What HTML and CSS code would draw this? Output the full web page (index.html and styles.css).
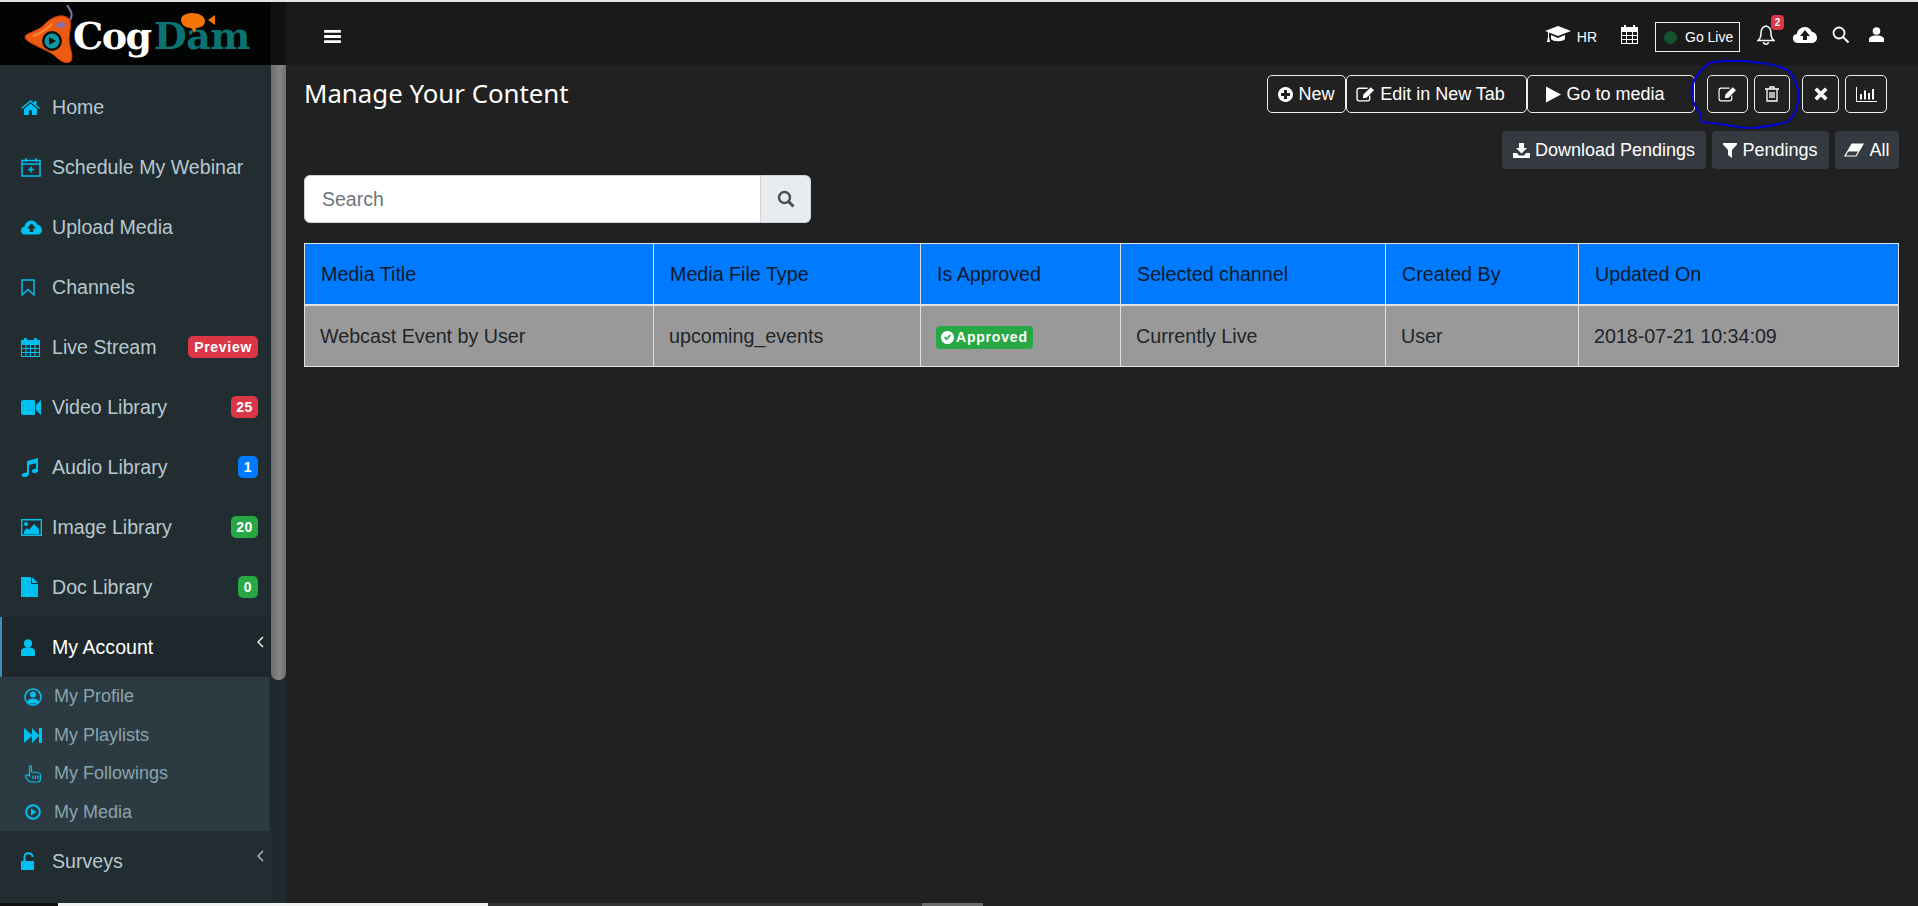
FILE: index.html
```html
<!DOCTYPE html>
<html>
<head>
	<title>Manage Your Content</title>
	<meta charset="utf-8" />
	<link rel="stylesheet" href="styles.css">
</head>
<body>
	<div class="topline"></div>
	<div class="top">
		<div class="logo">
			<svg class="logo-mark" width="50" height="60" viewBox="0 0 50 60">
				<path d="M43 0C46 5 49 8 47 13L44 18" fill="none" stroke="#8a6fa8" stroke-width="2"/>
				<path d="M1 32C1 28 13 27 20 20C27 12 38 8 44 13C49 18 45 26 45 34C45 42 50 50 47 56C43 60 36 56 31 51C25 45 1 38 1 32Z" fill="#ee5a12" stroke="#c93f08"/>
				<path d="M9 31C15 29 22 25 28 19" fill="none" stroke="#fb8a3c" stroke-width="2"/>
				<ellipse cx="37" cy="20" rx="5" ry="3" fill="#8a6fa8"/>
				<circle cx="28" cy="36" r="10" fill="#111"/>
				<circle cx="28" cy="36" r="7.500" fill="#0f9aa0"/>
				<path d="M25 32L32 36L25 40Z" fill="#111"/>
			</svg>
			<span class="logo-cog">Cog</span><span class="logo-dam">Dam</span>
			<svg class="logo-bubble" width="36" height="22" viewBox="0 0 36 22">
				<path d="M1 8C1 3 7 1 12 1C19 1 25 4 25 9C25 14 20 16 16 16L15 21L11 16C6 16 1 13 1 8Z" fill="#f47406"/>
				<path d="M28 8L35 3V13Z" fill="#f47406"/>
			</svg>
		</div>
		<div class="top-gap"></div>
		<div class="navbar">
			<svg class="burger" width="17" height="13" viewBox="0 0 18 14"><path d="M0 0H18V3H0ZM0 5.500H18V8.500H0ZM0 11H18V14H0Z" fill="#fff"/></svg>
			<div class="nav-right">
				<svg class="nav-hat" width="26" height="20" viewBox="0 0 26 20"><path d="M13 1L26 6L13 11L4 7.500V12L5 17H2L3 12V7L0 6ZM6 10L13 13L20 10V14C18 17 8 17 6 14Z" fill="#fff"/></svg>
				<span class="nav-hr">HR</span>
				<svg class="nav-cal" width="19" height="21" viewBox="0 0 19 21"><path d="M1 3H4V1H6V3H13V1H15V3H18V20H1ZM2 8V11H6V8ZM7 8V11H12V8ZM13 8V11H17V8ZM2 12V15H6V12ZM7 12V15H12V12ZM13 12V15H17V12ZM2 16V19H6V16ZM7 16V19H12V16ZM13 16V19H17V16Z" fill="#fff" fill-rule="evenodd"/></svg>
				<div class="golive"><span class="golive-dot"></span><span>Go Live</span></div>
				<div class="bell">
					<svg width="18" height="20" viewBox="0 0 18 20"><path d="M9 1C5 2 4 5 4 8C4 12 3 14 1 15.500H17C15 14 14 12 14 8C14 5 13 2 9 1ZM6.500 17C7 20 11 20 11.500 17" fill="none" stroke="#fff" stroke-width="1.500"/></svg>
					<span class="bell-count">2</span>
				</div>
				<svg class="nav-cloud" width="24" height="16" viewBox="0 0 24 16"><path d="M5 16C1 16 0 13 0 11C0 8 2 7 4 7C4 3 8 0 12 0C15 0 18 2 19 5C22 5 24 8 24 11C24 14 21 16 19 16ZM12 3L7 9H10V13H14V9H17Z" fill="#fff" fill-rule="evenodd"/></svg>
				<svg class="nav-search" width="17" height="17" viewBox="0 0 17 17"><circle cx="7" cy="7" r="5.500" fill="none" stroke="#fff" stroke-width="1.800"/><path d="M11 11L16.500 16.500" stroke="#fff" stroke-width="2"/></svg>
				<svg class="nav-user" width="15" height="15" viewBox="0 0 15 15"><circle cx="7.500" cy="4" r="3.800" fill="#fff"/><path d="M0 15V12C0 10 3 9 5 8.500H10C12 9 15 10 15 12V15Z" fill="#fff"/></svg>
			</div>
		</div>
	</div>

	<div class="page">
		<div class="sidebar">
			<a class="menu-item">
				<svg class="icon" width="19" height="15" viewBox="0 0 19 15" preserveAspectRatio="xMinYMid"><path d="M9.500 0L13 3V1H15.500V5L19 8L18 9L9.500 2L1 9L0 8ZM3 9L9.500 3.500L16 9V15H11V10.500H8V15H3Z"/></svg>
				<span>Home</span>
			</a>
			<a class="menu-item">
				<svg class="icon" width="20" height="20" viewBox="0 0 20 20" preserveAspectRatio="xMinYMid"><path d="M1 3.500H19V19H1ZM5 1V5M15 1V5M1 7H19M7 12.500H13M10 9.500V15.500" fill="none" stroke="#00c0ef" stroke-width="1.500"/></svg>
				<span>Schedule My Webinar</span>
			</a>
			<a class="menu-item">
				<svg class="icon" width="21" height="15" viewBox="0 0 24 16" preserveAspectRatio="xMinYMid"><path d="M5 16C1 16 0 13 0 11C0 8 2 7 4 7C4 3 8 0 12 0C15 0 18 2 19 5C22 5 24 8 24 11C24 14 21 16 19 16ZM12 3L7 9H10V13H14V9H17Z" fill-rule="evenodd"/></svg>
				<span>Upload Media</span>
			</a>
			<a class="menu-item">
				<svg class="icon" width="14" height="17" viewBox="0 0 14 17" preserveAspectRatio="xMinYMid"><path d="M1 1H13V16L7 10.500L1 16Z" fill="none" stroke="#00c0ef" stroke-width="1.400"/></svg>
				<span>Channels</span>
			</a>
			<a class="menu-item">
				<svg class="icon" width="19" height="20" viewBox="0 0 19 20" preserveAspectRatio="xMinYMid"><path d="M0 3H3V1H6V3H13V1H16V3H19V20H0ZM1 8V11H4.500V8ZM5.500 8V11H9V8ZM10 8V11H13.500V8ZM14.500 8V11H18V8ZM1 12V15H4.500V12ZM5.500 12V15H9V12ZM10 12V15H13.500V12ZM14.500 12V15H18V12ZM1 16V19H4.500V16ZM5.500 16V19H9V16ZM10 16V19H13.500V16ZM14.500 16V19H18V16Z" fill-rule="evenodd"/></svg>
				<span>Live Stream</span>
				<span class="badge badge-red badge-wide">Preview</span>
			</a>
			<a class="menu-item">
				<svg class="icon" width="20" height="15" viewBox="0 0 20 15" preserveAspectRatio="xMinYMid"><path d="M2 0H13C14 0 14 1 14 2V13C14 14 14 15 13 15H2C1 15 0 14 0 13V2C0 1 1 0 2 0ZM15 5L20 0V15L15 10Z"/></svg>
				<span>Video Library</span>
				<span class="badge badge-red">25</span>
			</a>
			<a class="menu-item">
				<svg class="icon" width="17" height="19" viewBox="0 0 17 19" preserveAspectRatio="xMinYMid"><path d="M6 3L17 0V13C17 15 12 16 11 14C10 12 13 10 15 11V5L8 7V16C8 19 2 20 1 18C0 16 3 14 6 15Z"/></svg>
				<span>Audio Library</span>
				<span class="badge badge-blue">1</span>
			</a>
			<a class="menu-item">
				<svg class="icon" width="21" height="17" viewBox="0 0 21 17" preserveAspectRatio="xMinYMid"><path d="M0.700 0.700H20.300V16.300H0.700Z" fill="none" stroke="#00c0ef" stroke-width="1.400"/><circle cx="5" cy="5" r="2"/><path d="M3 15V12L6 9L8 11L13 5L18 10V15Z"/></svg>
				<span>Image Library</span>
				<span class="badge badge-green">20</span>
			</a>
			<a class="menu-item">
				<svg class="icon" width="17" height="20" viewBox="0 0 17 20" preserveAspectRatio="xMinYMid"><path d="M0 0H10V7H17V20H0ZM11 0L17 6H11Z"/></svg>
				<span>Doc Library</span>
				<span class="badge badge-green">0</span>
			</a>
			<a class="menu-item active">
				<svg class="icon" width="14" height="17" viewBox="0 0 14 17" preserveAspectRatio="xMinYMid"><circle cx="7" cy="4.500" r="4.200"/><path d="M0 17V12C0 10 3 9 4 8.500H10C11 9 14 10 14 12V17Z"/></svg>
				<span>My Account</span>
				<svg class="chevron" width="8" height="12" viewBox="0 0 8 12"><path d="M7 1L2 6L7 11" fill="none" stroke="#fff" stroke-width="1.300"/></svg>
			</a>
			<div class="submenu">
				<a class="sub-item">
					<svg class="sub-icon" width="18" height="18" viewBox="0 0 18 18"><circle cx="9" cy="9" r="8" fill="none" stroke="#00c0ef" stroke-width="1.600"/><circle cx="9" cy="6.500" r="3"/><path d="M3.500 14C4 11 7 10.500 9 10.500C11 10.500 14 11 14.500 14C12 16 6 16 3.500 14Z"/></svg>
					<span>My Profile</span>
				</a>
				<a class="sub-item">
					<svg class="sub-icon" width="18" height="15" viewBox="0 0 18 15"><path d="M0 0L8 7V0L15 7V0H18V15H15V8L8 15V8L0 15Z"/></svg>
					<span>My Playlists</span>
				</a>
				<a class="sub-item">
					<svg class="sub-icon" width="17" height="18" viewBox="0 0 17 18"><path d="M5 1.500C5 0.500 7 0.500 7 1.500V7C10 7 16 7 16 10V14C16 16 15 17 13 17H6C4 17 1 12 1 11C1 9.500 3 9.500 5 11ZM8.500 10.500V14M11 10.500V14M13.500 10.500V14" fill="none" stroke="#00c0ef" stroke-width="1.200"/></svg>
					<span>My Followings</span>
				</a>
				<a class="sub-item">
					<svg class="sub-icon" width="16" height="16" viewBox="0 0 16 16"><circle cx="8" cy="8" r="6.800" fill="none" stroke="#00c0ef" stroke-width="2"/><path d="M6 4.500L11.500 8L6 11.500Z"/></svg>
					<span>My Media</span>
				</a>
			</div>
			<a class="menu-item">
				<svg class="icon" width="14" height="18" viewBox="0 0 14 18" preserveAspectRatio="xMinYMid"><path d="M0 9H13V18H0Z"/><path d="M3.500 9V5C3.500 0 11.500 0 11.500 5" fill="none" stroke="#00c0ef" stroke-width="2"/></svg>
				<span>Surveys</span>
				<svg class="chevron" width="8" height="12" viewBox="0 0 8 12"><path d="M7 1L2 6L7 11" fill="none" stroke="#b8c7ce" stroke-width="1.300"/></svg>
			</a>
		</div>
		<div class="side-scroll"><div class="side-thumb"></div></div>

		<div class="content">
			<div class="title-row">
				<h1>Manage Your Content</h1>
				<div class="actions">
					<a class="btn-line btn-new">
						<svg width="15" height="15" viewBox="0 0 15 15"><path d="M7.500 0A7.500 7.500 0 1 1 7.499 0ZM6 3V6H3V9H6V12H9V9H12V6H9V3Z" fill="#fff" fill-rule="evenodd"/></svg>
						New
					</a>
					<a class="btn-line btn-edit">
						<svg width="19" height="16" viewBox="0 0 18 15"><path d="M11 2H3C2 2 1 3 1 4V12C1 13 2 14 3 14H11C12 14 13 13 13 12V9" fill="none" stroke="#fff" stroke-width="1.300"/><path d="M14 1L17 4L10 11L6.500 11.500L7 8Z" fill="#fff"/></svg>
						Edit in New Tab
					</a>
					<a class="btn-line btn-go">
						<svg width="15" height="17" viewBox="0 0 14 15"><path d="M0 0L14 7.500L0 15Z" fill="#fff"/></svg>
						Go to media
					</a>
					<a class="btn-line btn-icon btn-pen">
						<svg width="19" height="16" viewBox="0 0 18 15"><path d="M11 2H3C2 2 1 3 1 4V12C1 13 2 14 3 14H11C12 14 13 13 13 12V9" fill="none" stroke="#fff" stroke-width="1.100"/><path d="M14 1L17 4L10 11L6.500 11.500L7 8Z" fill="#fff"/></svg>
					</a>
					<a class="btn-line btn-icon btn-trash">
						<svg width="14" height="16" viewBox="0 0 14 16"><path d="M0 3H14M5 3V1H9V3M2 3V15H12V3M5 6V12M7 6V12M9 6V12" fill="none" stroke="#fff" stroke-width="1.300"/></svg>
					</a>
					<a class="btn-line btn-icon btn-close">
						<svg width="14" height="14" viewBox="0 0 12 12"><path d="M1.500 1.500L10.500 10.500M10.500 1.500L1.500 10.500" stroke="#fff" stroke-width="3.200"/></svg>
					</a>
					<a class="btn-line btn-icon btn-chart">
						<svg width="21" height="15" viewBox="0 0 21 15"><path d="M0.500 0V14.500H21" fill="none" stroke="#fff"/><path d="M4 7H6V12.500H4ZM8 3.500H10V12.500H8ZM12 6H14V12.500H12ZM16 2H18V12.500H16Z" fill="#fff"/></svg>
					</a>
				</div>
			</div>

			<div class="filter-row">
				<a class="btn-dark btn-download">
					<svg width="17" height="15" viewBox="0 0 17 15"><path d="M6 0H11V5H14L8.500 10.500L3 5H6ZM0 10H4L6 12.500H11L13 10H17V15H0Z" fill="#fff"/></svg>
					Download Pendings
				</a>
				<a class="btn-dark btn-pendings">
					<svg width="14" height="15" viewBox="0 0 14 15"><path d="M0 0H14V1.500L9 7V15L5 12V7L0 1.500Z" fill="#fff"/></svg>
					Pendings
				</a>
				<a class="btn-dark btn-all">
					<svg width="20" height="14" viewBox="0 0 20 14"><path d="M8 1H19L12 13H1Z" fill="none" stroke="#fff" stroke-width="1.200"/><path d="M8 1H19L14.500 8.500H3.500Z" fill="#fff"/></svg>
					All
				</a>
			</div>

			<div class="search">
				<input class="search-input" type="text" placeholder="Search">
				<div class="search-btn">
					<svg width="18" height="18" viewBox="0 0 18 18"><circle cx="7.500" cy="7.500" r="5.500" fill="none" stroke="#495057" stroke-width="2.500"/><path d="M11.500 11.500L16.500 16.500" stroke="#495057" stroke-width="3"/></svg>
				</div>
			</div>

			<table class="media-table">
				<colgroup>
					<col class="col-title"><col class="col-type"><col class="col-approved"><col class="col-channel"><col class="col-by"><col class="col-updated">
				</colgroup>
				<thead>
					<tr>
						<th>Media Title</th>
						<th>Media File Type</th>
						<th>Is Approved</th>
						<th>Selected channel</th>
						<th>Created By</th>
						<th>Updated On</th>
					</tr>
				</thead>
				<tbody>
					<tr>
						<td>Webcast Event by User</td>
						<td>upcoming_events</td>
						<td>
							<span class="approved">
								<svg width="13" height="13" viewBox="0 0 13 13"><path d="M6.500 0A6.500 6.500 0 1 1 6.499 0ZM3 6.500L5.500 9.500L10 4.500L8.800 3.500L5.500 7L4.200 5.500Z" fill="#fff" fill-rule="evenodd"/></svg>
								Approved
							</span>
						</td>
						<td>Currently Live</td>
						<td>User</td>
						<td>2018-07-21 10:34:09</td>
					</tr>
				</tbody>
			</table>

			<!-- marker ring someone drew over the screenshot -->
			<svg class="scribble" width="110" height="70" viewBox="0 0 110 70">
				<path d="M12 63C9 62 12 56 10 54C7 50 3 46 2 37C0 24 6 14 20 4C30 1 38 2 44 2C54 1 62 3 70 4C82 5 90 7 97 11C103 15 105 20 107 27C110 38 108 47 105 54C101 60 98 63 94 64C82 66 72 69 60 69C48 69 40 66 30 65C24 64 18 64 12 63Z" fill="none" stroke="#0505d0" stroke-width="2.200"/>
			</svg>
		</div>
	</div>

	<div class="hscroll">
		<div class="hscroll-corner"></div>
		<div class="hscroll-white"></div>
		<div class="hscroll-mid"></div>
		<div class="hscroll-thumb"></div>
	</div>
</body>
</html>
```

FILE: styles.css
```css
html, body {
	margin: 0;
	height: 100%;
}
body {
	display: flex;
	flex-direction: column;
	height: 906px;
	overflow: hidden;
	background-color: #212121;
	color: #fff;
	font-family: "Liberation Sans", Arial, sans-serif;
}
a {
	text-decoration: none;
}

.topline {
	height: 2px;
	background-color: #e4e4e4;
}

/* top bar */
.top {
	display: flex;
	height: 63px;
}
.logo {
	position: relative;
	display: flex;
	align-items: center;
	flex: none;
	width: 271px;
	padding-left: 24px;
	box-sizing: border-box;
	background-color: #020303;
	font-family: "DejaVu Serif", serif;
	font-weight: bold;
	font-size: 38px;
}
.logo-mark {
	flex: none;
	margin-top: 2px;
}
.logo-cog {
	color: #fff;
	margin-top: 4px;
	margin-left: -1px;
	letter-spacing: -1.500px;
}
.logo-dam {
	color: #0b7473;
	margin-top: 4px;
	margin-left: 3px;
	letter-spacing: -0.500px;
}
.logo-bubble {
	position: absolute;
	left: 180px;
	top: 10px;
}
.top-gap {
	flex: none;
	width: 15px;
	background-color: #111;
}
.navbar {
	flex: 1;
	display: flex;
	align-items: center;
	padding-left: 38px;
	background-color: #1a1a1a;
}
.burger {
	margin-top: 6px;
}
.nav-right {
	margin-left: auto;
	display: flex;
	align-items: center;
	padding: 2px 34px 0 0;
}
.nav-hat {
	margin-right: 6px;
}
.nav-hr {
	font-size: 14px;
	margin-right: 23px;
	margin-top: 5px;
}
.nav-cal {
	margin-right: 16px;
}
.golive {
	display: flex;
	align-items: center;
	gap: 8px;
	width: 85px;
	height: 30px;
	box-sizing: border-box;
	padding-left: 8px;
	border: 1px solid #eee;
	font-size: 14px;
	margin: 5px 17px 0 0;
}
.golive-dot {
	width: 13px;
	height: 13px;
	border-radius: 50%;
	background-color: #14532d;
}
.bell {
	position: relative;
	display: flex;
	margin-right: 18px;
}
.bell-count {
	position: absolute;
	top: -10px;
	left: 14px;
	width: 13px;
	height: 15px;
	border-radius: 4px;
	background-color: #dc3545;
	font-size: 10px;
	font-weight: bold;
	line-height: 15px;
	text-align: center;
}
.nav-cloud {
	margin-right: 15px;
}
.nav-search {
	margin-right: 20px;
}

/* sidebar */
.page {
	flex: 1;
	display: flex;
	min-height: 0;
}
.sidebar {
	flex: none;
	width: 271px;
	padding-top: 12px;
	box-sizing: border-box;
	background-color: #222d32;
}
.menu-item {
	display: flex;
	align-items: center;
	height: 60px;
	box-sizing: border-box;
	padding: 0 13px 0 21px;
	color: #b8c7ce;
	font-size: 19.600px;
}
.icon {
	flex: none;
	fill: #00c0ef;
	width: 21px;
	margin-right: 10px;
}
.active {
	padding-left: 19px;
	border-left: 2px solid #3c8dbc;
	background-color: #1e282c;
	color: #fff;
}
.badge {
	margin-left: auto;
	height: 22px;
	min-width: 20px;
	padding: 0 5px;
	box-sizing: border-box;
	border-radius: 5px;
	color: #fff;
	font-size: 14px;
	font-weight: bold;
	line-height: 22px;
	letter-spacing: 0.6px;
	text-align: center;
}
.badge-wide {
	padding: 0 6px;
	letter-spacing: 0.700px;
}
.badge-red {
	background-color: #dc3545;
}
.badge-blue {
	background-color: #007bff;
}
.badge-green {
	background-color: #28a745;
}
.chevron {
	margin-left: auto;
	margin-right: -6px;
	margin-bottom: 10px;
}
.submenu {
	width: 269px;
	height: 154px;
	padding-top: 0.500px;
	box-sizing: border-box;
	background-color: #2c3b41;
}
.sub-item {
	display: flex;
	align-items: center;
	height: 38.500px;
	padding-left: 24px;
	color: #8aa4af;
	font-size: 18px;
}
.sub-icon {
	flex: none;
	width: 18px;
	fill: #00c0ef;
	margin-right: 12px;
}

.side-scroll {
	flex: none;
	width: 15px;
	background-color: #1d2a30;
}
.side-thumb {
	height: 615px;
	border-radius: 0 0 7px 7px;
	background: linear-gradient(90deg, #6e6e6e, #868686 60%, #6e6e6e);
}

/* main area */
.content {
	position: relative;
	flex: 1;
	min-width: 0;
	padding: 10px 19px 0 18px;
}
.title-row {
	display: flex;
	align-items: center;
	justify-content: space-between;
	height: 38px;
}
h1 {
	margin: 0 0 2px 0;
	font-size: 25.800px;
	font-weight: normal;
	font-family: "Noto Sans", "Open Sans", sans-serif;
}
.actions {
	display: flex;
	margin-right: 12px;
}
.btn-line {
	display: flex;
	align-items: center;
	justify-content: center;
	gap: 5px;
	height: 38px;
	box-sizing: border-box;
	border: 1px solid #eee;
	border-radius: 5px;
	color: #fff;
	font-size: 18px;
}
.btn-new {
	width: 79px;
}
.btn-edit {
	width: 181px;
	padding-right: 12px;
}
.btn-go {
	width: 168px;
	padding-right: 11px;
}
.btn-pen {
	width: 41px;
	margin-left: 12px;
}
.btn-trash {
	width: 36px;
	margin-left: 6px;
}
.btn-close {
	width: 37px;
	margin-left: 12px;
}
.btn-chart {
	width: 42px;
	margin-left: 6px;
}
.filter-row {
	display: flex;
	justify-content: flex-end;
	gap: 6px;
	margin-top: 18px;
}
.btn-dark {
	display: flex;
	align-items: center;
	justify-content: center;
	gap: 5px;
	height: 38px;
	border-radius: 4px;
	background-color: #343a40;
	color: #fff;
	font-size: 18px;
}
.btn-download {
	width: 204px;
}
.btn-pendings {
	width: 117px;
}
.btn-all {
	width: 64px;
}
.search {
	display: flex;
	width: 507px;
	height: 48px;
	margin-top: 6px;
}
.search-input {
	flex: 1;
	min-width: 0;
	padding: 0 17px;
	border: 1px solid #ced4da;
	border-radius: 6px 0 0 6px;
	background-color: #fff;
	font-family: inherit;
	font-size: 19.500px;
}
.search-input::placeholder {
	color: #6c757d;
}
.search-btn {
	display: flex;
	align-items: center;
	justify-content: center;
	width: 49px;
	border: 1px solid #ced4da;
	border-left: 0;
	border-radius: 0 6px 6px 0;
	background-color: #e9ecef;
}
.media-table {
	width: 1595px;
	margin-top: 20px;
	border-collapse: collapse;
	table-layout: fixed;
	font-size: 19.700px;
}
.col-title {
	width: 349px;
}
.col-type {
	width: 267px;
}
.col-approved {
	width: 200px;
}
.col-channel {
	width: 265px;
}
.col-by {
	width: 193px;
}
.media-table th {
	height: 61px;
	padding: 2px 16px 0 16px;
	box-sizing: border-box;
	border: 1px solid #dee2e6;
	border-bottom-width: 2px;
	background-color: #007bff;
	color: #0a1a2a;
	font-weight: normal;
	text-align: left;
}
.media-table td {
	height: 62px;
	padding: 2px 15px 0 15px;
	box-sizing: border-box;
	border: 1px solid #dee2e6;
	background-color: #999;
	color: #212529;
}
.approved {
	display: inline-flex;
	align-items: center;
	gap: 2px;
	height: 23px;
	padding: 0 5px;
	border-radius: 4px;
	background-color: #28a745;
	color: #fff;
	font-size: 14px;
	font-weight: bold;
	letter-spacing: 0.800px;
	vertical-align: middle;
}
.scribble {
	position: absolute;
	left: 1404px;
	top: -6px;
}

/* page's horizontal scrollbar, cut off at the bottom */
.hscroll {
	display: flex;
	height: 3px;
}
.hscroll-corner {
	width: 58px;
	background-color: #111;
}
.hscroll-white {
	width: 430px;
	background-color: #f1f1f1;
}
.hscroll-mid {
	width: 434px;
	background-color: #333;
}
.hscroll-thumb {
	width: 61px;
	background-color: #6a6a6a;
}
```
